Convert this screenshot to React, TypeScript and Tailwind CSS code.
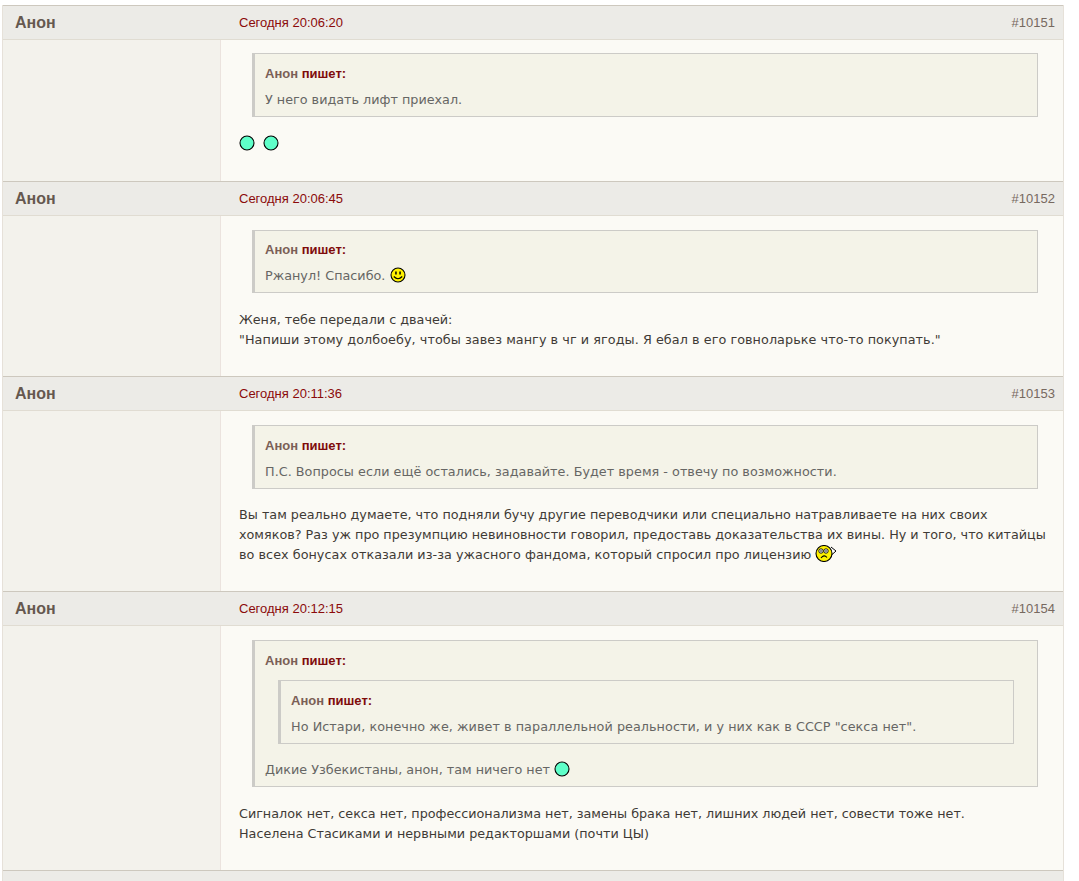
import React from "react";

const body = "font-['DejaVu_Sans',Verdana,sans-serif] text-[12.77px] leading-[20px]";

function Dot() {
  return (
    <svg width="16" height="16" viewBox="0 0 16 16" className="inline-block align-[-3px]">
      <circle cx="8" cy="8" r="7" fill="#5fffc9" stroke="#000" strokeWidth="1.1" />
    </svg>
  );
}

function Smile() {
  return (
    <svg width="16" height="16" viewBox="0 0 16 16" className="ml-[1px] inline-block align-[-3px]">
      <circle cx="8" cy="8" r="7" fill="#fff200" stroke="#000" strokeWidth="1.1" />
      <rect x="5.2" y="4.5" width="1.5" height="3" fill="#000" />
      <rect x="9.3" y="4.5" width="1.5" height="3" fill="#000" />
      <path d="M3.8 9.5 Q8 14 12.2 9.5" fill="none" stroke="#000" strokeWidth="1.1" />
    </svg>
  );
}

function Think() {
  return (
    <svg width="22" height="17" viewBox="0 0 22 17" className="inline-block align-[-3px]">
      <path d="M16 2 L21 6 L16.5 10" fill="#fff" stroke="#000" strokeWidth="1" />
      <circle cx="9" cy="8.5" r="8" fill="#fff200" stroke="#000" strokeWidth="1.1" />
      <circle cx="6" cy="6" r="2.2" fill="#fff" stroke="#000" strokeWidth="0.9" />
      <circle cx="11" cy="6" r="2.2" fill="#fff" stroke="#000" strokeWidth="0.9" />
      <circle cx="6" cy="6" r="0.8" fill="#000" />
      <circle cx="11" cy="6" r="0.8" fill="#000" />
      <path d="M6 13 Q9 9 12 12.5" fill="none" stroke="#000" strokeWidth="1.1" />
    </svg>
  );
}

function Quote({ children, inner, compact }: { children: React.ReactNode; inner?: boolean; compact?: boolean }) {
  return (
    <div
      className={
        "border border-l-[3px] border-[#cccbc7] bg-[#f4f3e8] pb-[6px] pl-[10px] pr-[10px] text-[#666664] " +
        (compact ? "pt-[9px] " : "pt-[10px] ") +
        (inner ? "mt-[9px] mb-[16px] mr-[13px] ml-[13px]" : "ml-[13px] mr-[9px]")
      }
    >
      <div className="mb-[6px] font-['Liberation_Sans',Arial,sans-serif] text-[13px] font-bold leading-[20px] text-[#7b5f57]">
        Анон <span className="text-[#7f0b0b]">пишет:</span>
      </div>
      {children}
    </div>
  );
}

function Post({ num, time, children, pt, pb }: { num: number; time: string; children: React.ReactNode; pt: string; pb: string }) {
  return (
    <div>
      <div className="flex h-[35px] items-center border-y border-y-[#cdc8be] border-b-[#e0dcd2] bg-[#ecebe7] font-['Liberation_Sans',Arial,sans-serif]">
        <div className="w-[236px] pl-[12px] text-[16px] font-bold text-[#65584f]">Анон</div>
        <div className="flex-1 text-[13px] text-[#8b0a0a]">{time}</div>
        <div className="pr-[8px] text-[13px] text-[#77695f]">#{num}</div>
      </div>
      <div className="flex">
        <div className="w-[218px] shrink-0 border-r border-r-[#ebe3de] bg-[#f3f2ec]" />
        <div className={"min-w-0 flex-1 bg-[#fbfaf5] pl-[18px] pr-[16px] text-[#3f3a36] " + body + " " + pt + " " + pb}>
          {children}
        </div>
      </div>
    </div>
  );
}

export default function App() {
  return (
    <div className="h-[881px] overflow-hidden bg-white pl-[2px] pr-[15px] pt-[5px]">
      <div className="border-x border-x-[#e6e1d9]">
        <Post num={10151} time="Сегодня 20:06:20" pt="pt-[13px]" pb="pb-[28px]">
          <Quote>
            <div>У него видать лифт приехал.</div>
          </Quote>
          <div className="mt-[16px] flex h-[20px] items-center gap-[8px]">
            <Dot />
            <Dot />
          </div>
        </Post>
        <Post num={10152} time="Сегодня 20:06:45" pt="pt-[14px]" pb="pb-[26px]">
          <Quote compact>
            <div>
              Ржанул! Спасибо. <Smile />
            </div>
          </Quote>
          <div className="mt-[17px] -translate-y-0">
            Женя, тебе передали с двачей:
            <br />
            <span className="tracking-[0.06px]">
              "Напиши этому долбоебу, чтобы завез мангу в чг и ягоды. Я ебал в его говноларьке что-то покупать."
            </span>
          </div>
        </Post>
        <Post num={10153} time="Сегодня 20:11:36" pt="pt-[14px]" pb="pb-[26px]">
          <Quote>
            <div className="tracking-[0.03px]">П.С. Вопросы если ещё остались, задавайте. Будет время - отвечу по возможности.</div>
          </Quote>
          <div className="mt-[16px]">
            Вы там реально думаете, что подняли бучу другие переводчики или специально натравливаете на них своих
            <br />
            хомяков? Раз уж про презумпцию невиновности говорил, предоставь доказательства их вины. Ну и того, что китайцы
            <br />
            <span className="tracking-[0.04px]">во всех бонусах отказали из-за ужасного фандома, который спросил про лицензию</span> <Think />
          </div>
        </Post>
        <Post num={10154} time="Сегодня 20:12:15" pt="pt-[14px]" pb="pb-[26px]">
          <Quote>
            <Quote inner>
              <div className="tracking-[0.055px]">Но Истари, конечно же, живет в параллельной реальности, и у них как в СССР "секса нет".</div>
            </Quote>
            <div>
              Дикие Узбекистаны, анон, там ничего нет <Dot />
            </div>
          </Quote>
          <div className="mt-[17px]">
            <span className="tracking-[-0.02px]">Сигналок нет, секса нет, профессионализма нет, замены брака нет, лишних людей нет, совести тоже нет.</span>
            <br />
            Населена Стасиками и нервными редакторшами (почти ЦЫ)
          </div>
        </Post>
        <div className="h-[11px] border-t border-t-[#cdc8be] bg-[#ecebe7]" />
      </div>
    </div>
  );
}
